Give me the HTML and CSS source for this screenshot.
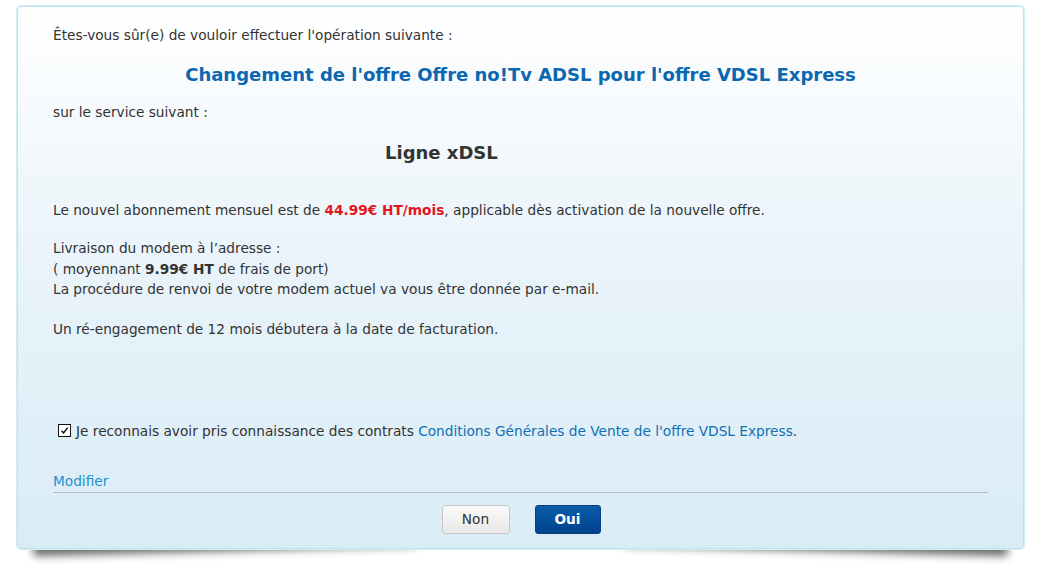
FILE: index.html
```html
<!DOCTYPE html>
<html lang="fr">
<head>
<meta charset="utf-8">
<title>Confirmation</title>
<link rel="stylesheet" href="styles.css">
</head>
<body>
<div class="wrap">
<div class="dialog">
  <p class="line intro">Êtes-vous sûr(e) de vouloir effectuer l'opération suivante :</p>
  <h2 class="title">Changement de l'offre Offre no!Tv ADSL pour l'offre VDSL Express</h2>
  <p class="line service">sur le service suivant :</p>
  <p class="service-name">Ligne xDSL</p>
  <p class="line price">Le nouvel abonnement mensuel est de <strong class="red">44.99€ HT/mois</strong>, applicable dès activation de la nouvelle offre.</p>
  <p class="line delivery">Livraison du modem à l’adresse :<br>( moyennant <strong>9.99€ HT</strong> de frais de port)<br>La procédure de renvoi de votre modem actuel va vous être donnée par e-mail.</p>
  <p class="line engage">Un ré-engagement de 12 mois débutera à la date de facturation.</p>
  <div class="accept">
    <span class="check"><svg width="11" height="11" viewBox="0 0 11 11"><path d="M2.5 5.8 L4.6 8 L8.6 2.6" fill="none" stroke="#000" stroke-width="1.3"/></svg></span>
    <span>Je reconnais avoir pris connaissance des contrats <a class="cgv" href="#">Conditions Générales de Vente de l'offre VDSL Express</a>.</span>
  </div>
  <div class="modify"><a href="#">Modifier</a></div>
  <div class="actions">
    <button class="btn btn-no">Non</button>
    <button class="btn btn-yes">Oui</button>
  </div>
</div>
<div class="shadow shadow-left"></div>
<div class="shadow shadow-right"></div>
</div>
</body>
</html>
```
FILE: styles.css
```css
html {
  background: #ffffff;
}
body {
  margin: 0;
  padding: 0 0 16px 0;
  font-family: "DejaVu Sans", Verdana, sans-serif;
  font-size: 13.7px;
  color: #333333;
}
.wrap {
  position: relative;
  width: 1007px;
  margin: 6px 0 0 17px;
}
.shadow {
  position: absolute;
  z-index: 0;
  bottom: 10px;
  width: 38%;
  height: 20px;
  background: #777777;
  box-shadow: 0 12px 8px rgba(0, 0, 0, 0.6);
}
.shadow-left {
  left: 16px;
  transform: rotate(-1.5deg);
}
.shadow-right {
  right: 16px;
  transform: rotate(1.5deg);
}
.dialog {
  position: relative;
  z-index: 1;
  box-sizing: border-box;
  width: 1007px;
  height: 543px;
  padding: 18px 35px 0 35px;
  border: 1px solid #bde3ed;
  border-radius: 4px;
  background: linear-gradient(to bottom, #ffffff 0%, #eaf4fa 45%, #d9ecf6 100%);
  box-shadow: 0 0 0 1px #d4eef5;
}
.line {
  margin: 0;
  line-height: 20px;
}
.title {
  margin: 18px 0 0 0;
  font-size: 18px;
  line-height: 24px;
  font-weight: bold;
  color: #0b67b0;
  text-align: center;
}
.service {
  margin-top: 15px;
}
.service-name {
  margin: 19px 0 0 0;
  padding-left: 332px;
  font-size: 18px;
  line-height: 24px;
  font-weight: bold;
  color: #333333;
}
.price {
  margin-top: 35px;
}
.red {
  color: #e3161d;
}
.delivery {
  margin-top: 18px;
  line-height: 20.5px;
}
.engage {
  margin-top: 19px;
}
.accept {
  display: flex;
  align-items: center;
  gap: 5px;
  margin-top: 82px;
  padding-left: 5px;
  line-height: 20px;
}
.check {
  box-sizing: border-box;
  display: flex;
  align-items: center;
  justify-content: center;
  width: 13px;
  height: 13px;
  border: 1px solid #111111;
  background: #ffffff;
}
.cgv {
  color: #1070b5;
  text-decoration: none;
}
.modify {
  margin-top: 30px;
  line-height: 20px;
  border-bottom: 1px solid #b3bec8;
  padding-bottom: 1px;
}
.modify a {
  color: #1a90d3;
  text-decoration: none;
}
.actions {
  display: flex;
  justify-content: center;
  gap: 25px;
  margin-top: 12px;
  padding-left: 1px;
}
.btn {
  box-sizing: border-box;
  height: 29px;
  border-radius: 3px;
  font-family: "DejaVu Sans", Verdana, sans-serif;
  font-size: 13.7px;
  cursor: pointer;
}
.btn-no {
  width: 68px;
  border: 1px solid #c8c8c8;
  background: linear-gradient(to bottom, #fafafa 0%, #e8e8e8 100%);
  color: #333333;
}
.btn-yes {
  width: 66px;
  border: 1px solid #063e80;
  background: linear-gradient(to bottom, #0a5cab 0%, #00428d 100%);
  color: #ffffff;
  font-weight: bold;
}
```
